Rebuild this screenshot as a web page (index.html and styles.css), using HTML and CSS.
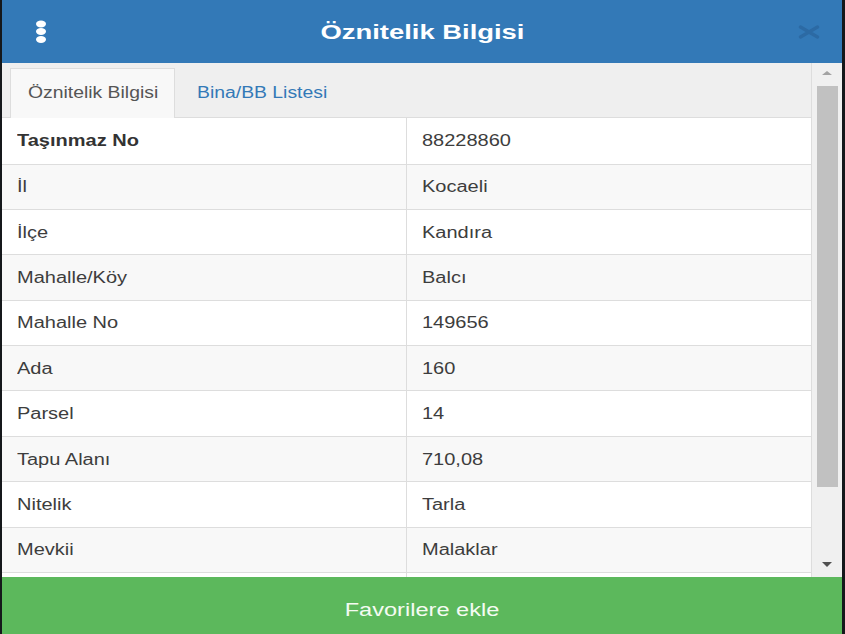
FILE: index.html
```html
<!DOCTYPE html>
<html lang="tr">
<head>
<meta charset="utf-8">
<title>Öznitelik Bilgisi</title>
<link rel="stylesheet" href="styles.css">
</head>
<body>
<div class="modal">
  <header class="modal-header">
    <div class="hdr-side left">
      <svg class="kebab" width="12" height="24" viewBox="0 0 12 24">
        <ellipse cx="6" cy="4" rx="5" ry="3.4" fill="#fff"/>
        <ellipse cx="6" cy="11.5" rx="5" ry="3.4" fill="#fff"/>
        <ellipse cx="6" cy="19.5" rx="5" ry="3.4" fill="#fff"/>
      </svg>
    </div>
    <h4 class="modal-title"><span class="stretch title-text">Öznitelik Bilgisi</span></h4>
    <div class="hdr-side right">
      <svg class="close" width="22" height="14" viewBox="0 0 22 14">
        <path d="M2.5 2 L19.5 12 M2.5 12 L19.5 2" stroke="#2c6aa4" stroke-width="3.4" stroke-linecap="round" fill="none"/>
      </svg>
    </div>
  </header>
  <div class="modal-body">
    <div class="content">
      <ul class="tabs">
        <li class="tab active"><span class="stretch tab-text">Öznitelik Bilgisi</span></li>
        <li class="tab"><span class="stretch tab-text">Bina/BB Listesi</span></li>
      </ul>
      <table class="attr">
        <tbody>
          <tr><td class="key strong"><span class="stretch">Taşınmaz No</span></td><td><span class="stretch">88228860</span></td></tr>
          <tr><td class="key"><span class="stretch">İl</span></td><td><span class="stretch">Kocaeli</span></td></tr>
          <tr><td class="key"><span class="stretch">İlçe</span></td><td><span class="stretch">Kandıra</span></td></tr>
          <tr><td class="key"><span class="stretch">Mahalle/Köy</span></td><td><span class="stretch">Balcı</span></td></tr>
          <tr><td class="key"><span class="stretch">Mahalle No</span></td><td><span class="stretch">149656</span></td></tr>
          <tr><td class="key"><span class="stretch">Ada</span></td><td><span class="stretch">160</span></td></tr>
          <tr><td class="key"><span class="stretch">Parsel</span></td><td><span class="stretch">14</span></td></tr>
          <tr><td class="key"><span class="stretch">Tapu Alanı</span></td><td><span class="stretch">710,08</span></td></tr>
          <tr><td class="key"><span class="stretch">Nitelik</span></td><td><span class="stretch">Tarla</span></td></tr>
          <tr><td class="key"><span class="stretch">Mevkii</span></td><td><span class="stretch">Malaklar</span></td></tr>
          <tr><td class="key">&nbsp;</td><td>&nbsp;</td></tr>
        </tbody>
      </table>
    </div>
    <div class="scrollbar">
      <span class="arrow up"></span>
      <span class="thumb"></span>
      <span class="arrow down"></span>
    </div>
  </div>
  <button class="fav" type="button"><span class="stretch fav-text">Favorilere ekle</span></button>
</div>
</body>
</html>
```
FILE: styles.css
```css
html, body {
  margin: 0;
  height: 100%;
}
body {
  background: #15181b;
  font-family: "Liberation Sans", Arial, sans-serif;
  overflow: hidden;
}
.modal {
  margin-left: 2px;
  width: 840px;
  height: 634px;
  display: flex;
  flex-direction: column;
  background: #fff;
}
.stretch {
  display: inline-block;
  transform: scaleX(1.25);
  transform-origin: left center;
  white-space: nowrap;
}

/* header */
.modal-header {
  flex: none;
  height: 63px;
  background: #3379b7;
  display: flex;
  align-items: center;
}
.hdr-side {
  width: 80px;
  box-sizing: border-box;
  display: flex;
  align-items: center;
}
.hdr-side.left {
  padding-left: 33px;
  padding-top: 1px;
}
.hdr-side.right {
  justify-content: flex-end;
  padding-right: 22px;
}
.modal-title {
  flex: 1;
  margin: 0;
  text-align: center;
  color: #fff;
  font-size: 20px;
  font-weight: bold;
  line-height: 24px;
  padding-top: 1px;
}
.title-text {
  transform: scaleX(1.37);
  transform-origin: center center;
}

/* body */
.modal-body {
  flex: 1;
  display: flex;
  min-height: 0;
  overflow: hidden;
}
.content {
  flex: 1;
  background: #efefef;
  overflow: hidden;
  border-right: 1px solid #dddddd;
}
.tabs {
  list-style: none;
  margin: 0;
  padding: 5px 0 0 8px;
  display: flex;
  gap: 4px;
  border-bottom: 1px solid #dddddd;
}
.tab {
  height: 49px;
  line-height: 48px;
  padding: 0 17px;
  font-size: 16px;
  color: #3379b7;
  border: 1px solid transparent;
  border-bottom: none;
  margin-bottom: -1px;
  width: 165px;
  box-sizing: border-box;
}
.tab.active {
  background: #f8f8f8;
  border-color: #dddddd;
  color: #555555;
  height: 50px;
}
.tab-text {
  transform: scaleX(1.21);
}

.attr {
  width: 100%;
  border-collapse: collapse;
  table-layout: fixed;
  background: #fff;
}
.attr tr {
  height: 45.4px;
}
.attr tr:first-child {
  height: 46px;
}
.attr tr:nth-child(even) {
  background: #f8f8f8;
}
.attr td {
  border-top: 1px solid #dddddd;
  padding: 1px 15px 0;
  font-size: 16px;
  line-height: 20px;
  color: #3d3d3d;
  vertical-align: middle;
}
.attr td + td {
  border-left: 1px solid #dddddd;
}
.attr tr:first-child td {
  border-top: none;
}
.attr td.strong {
  font-weight: bold;
  color: #333333;
}

/* scrollbar */
.scrollbar {
  flex: none;
  width: 30px;
  background: #f0f0f0;
  display: flex;
  flex-direction: column;
  align-items: center;
  padding-top: 8px;
  padding-bottom: 10px;
  box-sizing: border-box;
}
.arrow {
  width: 0;
  height: 0;
  border-left: 5px solid transparent;
  border-right: 5px solid transparent;
}
.arrow.up {
  border-bottom: 4px solid #a3a3a3;
}
.arrow.down {
  margin-top: auto;
  border-top: 5px solid #505050;
}
.thumb {
  display: block;
  margin-top: 11px;
  width: 21px;
  height: 401px;
  background: #c1c1c1;
}

/* footer button */
.fav {
  flex: none;
  height: 57px;
  width: 100%;
  margin: 0;
  border: none;
  background: #5cb85c;
  color: #f4fbf2;
  font-family: "Liberation Sans", Arial, sans-serif;
  font-size: 18px;
  padding: 10px 0 0;
  text-align: center;
  cursor: pointer;
}
.fav-text {
  transform: scaleX(1.31);
  transform-origin: center center;
}
```
